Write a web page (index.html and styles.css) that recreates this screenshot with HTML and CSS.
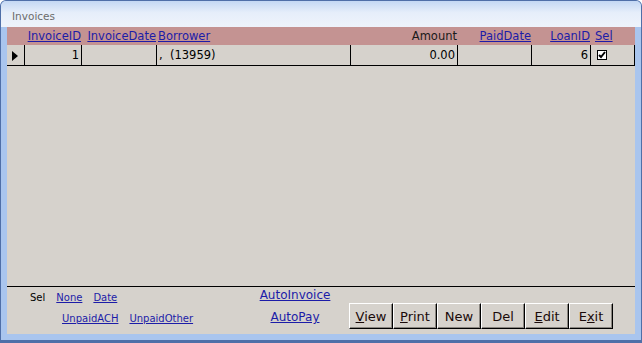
FILE: index.html
```html
<!DOCTYPE html>
<html lang="en">
<head>
    <meta charset="UTF-8">
    <title>Invoices</title>
    <link rel="stylesheet" href="styles.css">
</head>
<body>
    <div class="window">
        <div class="titlebar">Invoices</div>
        <div class="content">
            <div class="grid">
                <div class="hcell"></div>
                <div class="hcell right"><a href="#">InvoiceID</a></div>
                <div class="hcell right"><a href="#">InvoiceDate</a></div>
                <div class="hcell"><a href="#">Borrower</a></div>
                <div class="hcell right">Amount</div>
                <div class="hcell right"><a href="#">PaidDate</a></div>
                <div class="hcell right"><a href="#">LoanID</a></div>
                <div class="hcell sel"><a href="#">Sel</a></div>

                <div class="cell selector">
                    <svg width="6" height="10" viewBox="0 0 6 10"><path d="M0 0 L6 5 L0 10 Z" fill="#000"/></svg>
                </div>
                <div class="cell right">1</div>
                <div class="cell"></div>
                <div class="cell">,&nbsp; (13959)</div>
                <div class="cell right">0.00</div>
                <div class="cell"></div>
                <div class="cell right">6</div>
                <div class="cell check">
                    <svg width="10" height="10" viewBox="0 0 10 10">
                        <rect x="0" y="0" width="10" height="10" fill="#000"/>
                        <rect x="1" y="1" width="8" height="8" fill="#fff"/>
                        <path d="M2 5 L4 7 L8 2" stroke="#000" stroke-width="2" fill="none"/>
                    </svg>
                </div>
            </div>

            <div class="footer">
                <div class="filters">
                    <div class="row">
                        <span class="label">Sel</span>
                        <a href="#">None</a>
                        <a href="#">Date</a>
                    </div>
                    <div class="row second">
                        <a href="#">UnpaidACH</a>
                        <a href="#">UnpaidOther</a>
                    </div>
                </div>
                <div class="auto">
                    <a href="#">AutoInvoice</a>
                    <a href="#">AutoPay</a>
                </div>
                <div class="buttons">
                    <button><u>V</u>iew</button>
                    <button><u>P</u>rint</button>
                    <button>New</button>
                    <button>Del</button>
                    <button><u>E</u>dit</button>
                    <button>E<u>x</u>it</button>
                </div>
            </div>
        </div>
    </div>
</body>
</html>
```

FILE: styles.css
```css
body {
    margin: 0;
    font-family: "DejaVu Sans", Verdana, sans-serif;
    font-size: 10px;
    background: #fff;
}

.window {
    width: 642px;
    height: 343px;
    box-sizing: border-box;
    border: 1px solid #4f6fa8;
    border-bottom-width: 3px;
    border-radius: 6px 6px 0 0;
    background: #a9c5ee;
    padding: 0 6px 6px 6px;
    display: flex;
    flex-direction: column;
}

.titlebar {
    height: 26px;
    margin: 0 -6px;
    padding: 9px 0 0 11px;
    box-sizing: border-box;
    font-size: 10.5px;
    color: #6b6b6b;
    background: linear-gradient(#c4d8f4, #e6eefa 45%, #eef3fb);
    border-radius: 5px 5px 0 0;
}

.content {
    flex: 1;
    background: #d6d2cc;
    display: flex;
    flex-direction: column;
    justify-content: space-between;
}

a {
    color: #1c1ca8;
}

.grid {
    display: grid;
    grid-template-columns: 18px 57px 75px 194px 107px 74px 59px 44px;
    grid-template-rows: 18px 21px;
    font-size: 11.5px;
}

.hcell {
    background: #c49392;
    padding: 2px 1px 0 1px;
    color: #1a1a1a;
    white-space: nowrap;
}

.hcell.right {
    text-align: right;
}

.hcell.sel {
    padding-left: 4px;
}

.cell {
    border-right: 1px solid #000;
    border-bottom: 1px solid #000;
    padding: 3px 2px 0 2px;
    white-space: nowrap;
}

.cell.right {
    text-align: right;
}

.selector {
    padding: 5px 0 0 5px;
}

.check {
    padding: 4px 0 0 6px;
}

.footer {
    height: 47px;
    border-top: 1px solid #000;
    display: flex;
}

.filters {
    width: 253px;
    box-sizing: border-box;
    padding: 5px 0 0 23px;
}

.filters .row {
    display: flex;
    gap: 11px;
}

.filters .second {
    margin: 10px 0 0 32px;
}

.label {
    color: #000;
}

.auto {
    width: 70px;
    display: flex;
    flex-direction: column;
    align-items: center;
    gap: 8px;
    padding-top: 1px;
    font-size: 12px;
}

.buttons {
    display: flex;
    margin: 16px 0 0 19px;
    height: 26px;
}

button {
    width: 44px;
    height: 26px;
    padding: 0;
    font-family: "DejaVu Sans", Verdana, sans-serif;
    font-size: 13px;
    color: #1a0a0a;
    background: #d6d2cc;
    border: 1px solid;
    border-color: #fff #000 #000 #fff;
    box-shadow: inset -1px -1px #8a8680;
}
```
